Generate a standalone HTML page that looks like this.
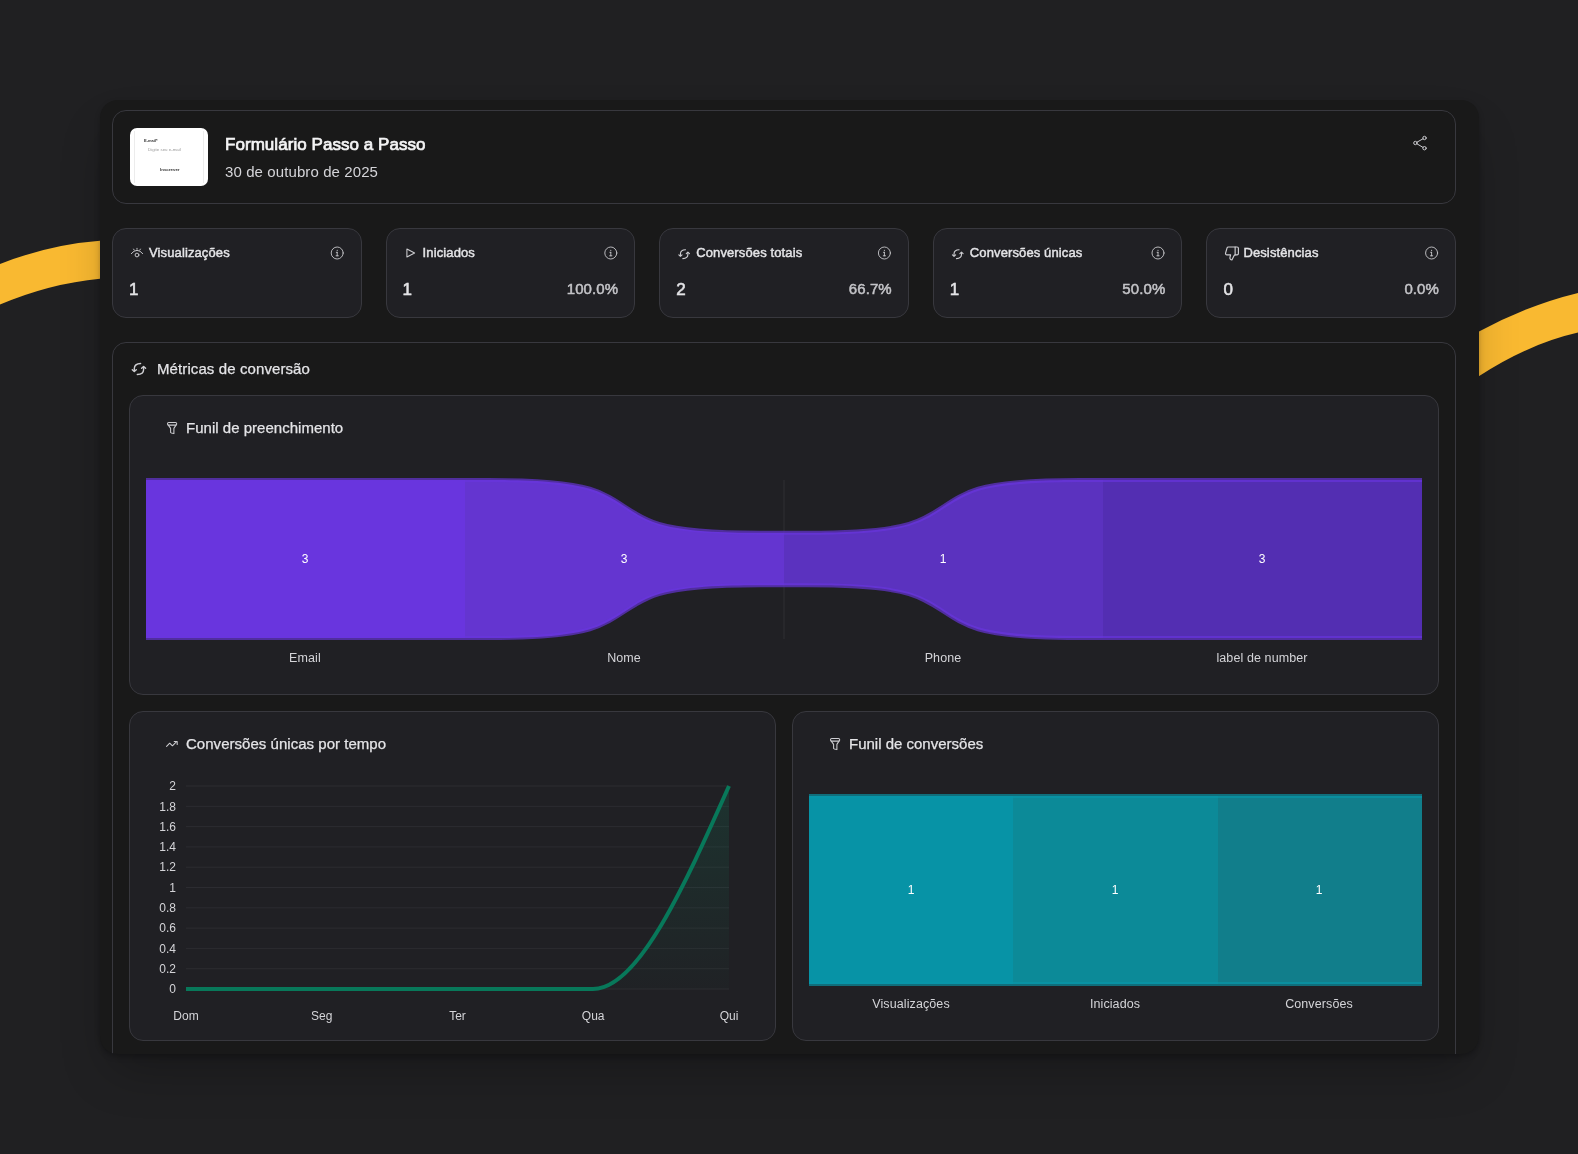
<!DOCTYPE html>
<html><head><meta charset="utf-8">
<style>
*{box-sizing:border-box;margin:0;padding:0}
html,body{width:1578px;height:1154px;overflow:hidden;background:#202022;font-family:"Liberation Sans",sans-serif;color:#e4e4e7}
#main{position:absolute;left:100px;top:100px;width:1379px;height:954px;background:#191919;border-radius:18px;overflow:hidden;box-shadow:0 25px 50px -12px rgba(0,0,0,0.28), 0 3px 6px -1px rgba(0,0,0,0.3)}
#in{position:absolute;left:-100px;top:-100px;width:1578px;height:1154px;will-change:transform}
.card{position:absolute;border:1px solid #38383e;border-radius:14px}
.stat{background:#202024;top:228px;width:249.6px;height:90px}
.t{position:absolute;white-space:nowrap;line-height:1}
.lbl{font-size:13px;font-weight:400;color:#e4e4e7;letter-spacing:0.12px;-webkit-text-stroke:0.45px #e4e4e7}
.val{font-size:17px;font-weight:400;color:#e4e4e7;-webkit-text-stroke:0.55px #e4e4e7}
.pct{font-size:15px;font-weight:400;color:#c4c4c8;letter-spacing:0.1px;-webkit-text-stroke:0.5px #c4c4c8}
.h2{font-size:15px;color:#e4e4e7;letter-spacing:0.1px;-webkit-text-stroke:0.25px #e4e4e7}
svg{position:absolute;overflow:visible}
</style></head><body>
<svg style="left:0;top:0" width="1578" height="1154">
<path d="M0 263.9 Q50 244.5 100 240.8 L115 239.7 L115 277.4 L100 278.8 Q50 283.5 0 304.6 Z" fill="#f9b931"/>
<path d="M1465 339 L1478 332 Q1528 305 1578 292.9 L1578 332.6 Q1528 344 1478 376.8 L1465 385.3 Z" fill="#f9b931"/>
</svg>
<div id="main"><div id="in">
  <div class="card" style="left:112px;top:110px;width:1344px;height:94px"></div>
  <div style="position:absolute;left:130px;top:128px;width:78px;height:58px;background:#fff;border-radius:7px;overflow:hidden">
    <div style="position:absolute;left:4px;top:3px;width:1px;height:52px;background:#ececec"></div>
    <div style="position:absolute;left:73px;top:3px;width:1px;height:52px;background:#ececec"></div>
    <div class="t" style="left:14px;top:10.5px;font-size:8px;font-weight:bold;color:#333;transform:scale(0.5);transform-origin:0 0">E-mail*</div>
    <div class="t" style="left:18px;top:20px;font-size:8px;color:#9a9a9a;transform:scale(0.55);transform-origin:0 0">Digite seu e-mail</div>
    <div class="t" style="left:29.5px;top:39.5px;font-size:8px;font-weight:bold;color:#333;transform:scale(0.55);transform-origin:0 0">Inscrever</div>
  </div>
  <div class="t" style="left:225px;top:136px;font-size:17px;font-weight:400;color:#f4f4f5;letter-spacing:0.05px;-webkit-text-stroke:0.7px #f4f4f5">Formulário Passo a Passo</div>
  <div class="t" style="left:225px;top:164px;font-size:15px;color:#d4d4d8;letter-spacing:0.1px">30 de outubro de 2025</div>
  <div class="card stat" style="left:112px"></div>
<div class="t lbl" style="left:149px;top:246px">Visualizações</div>
<div class="t val" style="left:129px;top:281px">1</div>
<div class="card stat" style="left:385.6px"></div>
<div class="t lbl" style="left:422.6px;top:246px">Iniciados</div>
<div class="t val" style="left:402.6px;top:281px">1</div>
<div class="t pct" style="right:959.8px;top:281px">100.0%</div><div class="card stat" style="left:659.2px"></div>
<div class="t lbl" style="left:696.2px;top:246px">Conversões totais</div>
<div class="t val" style="left:676.2px;top:281px">2</div>
<div class="t pct" style="right:686.2px;top:281px">66.7%</div><div class="card stat" style="left:932.8px"></div>
<div class="t lbl" style="left:969.8px;top:246px">Conversões únicas</div>
<div class="t val" style="left:949.8px;top:281px">1</div>
<div class="t pct" style="right:412.6px;top:281px">50.0%</div><div class="card stat" style="left:1206.4px"></div>
<div class="t lbl" style="left:1243.4px;top:246px">Desistências</div>
<div class="t val" style="left:1223.4px;top:281px">0</div>
<div class="t pct" style="right:139.0px;top:281px">0.0%</div>
  <div class="card" style="left:112px;top:342px;width:1344px;height:800px"></div>
  <div class="t h2" style="left:157px;top:361px">Métricas de conversão</div>

  <div class="card" style="left:129px;top:395px;width:1310px;height:300px;background:#202024"></div>
  <div class="t h2" style="left:186px;top:420px;letter-spacing:0.02px">Funil de preenchimento</div>
  <svg style="left:0;top:0" width="1578" height="1154">
    <line x1="784" x2="784" y1="480" y2="639" stroke="#2e2e33" stroke-width="1"/>
    <rect x="146" y="480" width="319" height="158" fill="#6935de"/>
    <path d="M 465.00 480.00 L 488.93 480.00 C 512.85 480.00 560.70 480.00 589.94 488.78 C 619.18 497.56 629.82 515.11 659.06 523.89 C 688.30 532.67 736.15 532.67 760.07 532.67 L 784.00 532.67 L 784.00 585.33 L 760.07 585.33 C 736.15 585.33 688.30 585.33 659.06 594.11 C 629.82 602.89 619.18 620.44 589.94 629.22 C 560.70 638.00 512.85 638.00 488.93 638.00 L 465.00 638.00 Z" fill="#6435d0"/>
    <path d="M 784.00 532.67 L 807.93 532.67 C 831.85 532.67 879.70 532.67 908.94 523.89 C 938.18 515.11 948.82 497.56 978.06 488.78 C 1007.30 480.00 1055.15 480.00 1079.08 480.00 L 1103.00 480.00 L 1103.00 638.00 L 1079.08 638.00 C 1055.15 638.00 1007.30 638.00 978.06 629.22 C 948.82 620.44 938.18 602.89 908.94 594.11 C 879.70 585.33 831.85 585.33 807.93 585.33 L 784.00 585.33 Z" fill="#5b32bf"/>
    <rect x="1103" y="480" width="319" height="158" fill="#532eb2"/>
    <g stroke="#6935de" stroke-opacity="0.66" stroke-width="4" fill="none">
      <path d="M146 480H465M146 638H465"/>
      <path d="M 465.00 480.00 L 488.93 480.00 C 512.85 480.00 560.70 480.00 589.94 488.78 C 619.18 497.56 629.82 515.11 659.06 523.89 C 688.30 532.67 736.15 532.67 760.07 532.67 L 784.00 532.67"/><path d="M 465.00 638.00 L 488.93 638.00 C 512.85 638.00 560.70 638.00 589.94 629.22 C 619.18 620.44 629.82 602.89 659.06 594.11 C 688.30 585.33 736.15 585.33 760.07 585.33 L 784.00 585.33"/><path d="M 784.00 532.67 L 807.93 532.67 C 831.85 532.67 879.70 532.67 908.94 523.89 C 938.18 515.11 948.82 497.56 978.06 488.78 C 1007.30 480.00 1055.15 480.00 1079.08 480.00 L 1103.00 480.00"/><path d="M 784.00 585.33 L 807.93 585.33 C 831.85 585.33 879.70 585.33 908.94 594.11 C 938.18 602.89 948.82 620.44 978.06 629.22 C 1007.30 638.00 1055.15 638.00 1079.08 638.00 L 1103.00 638.00"/>
      <path d="M1103 480H1422M1103 638H1422"/>
    </g>
    <g font-size="12" fill="#ffffff" text-anchor="middle">
      <text x="305" y="563">3</text><text x="624" y="563">3</text><text x="943" y="563">1</text><text x="1262" y="563">3</text>
    </g>
    <g font-size="12.5" fill="#d4d4d8" text-anchor="middle" letter-spacing="0.1">
      <text x="305" y="661.8">Email</text><text x="624" y="661.8">Nome</text><text x="943" y="661.8">Phone</text><text x="1262" y="661.8">label de number</text>
    </g>
  </svg>

  <div class="card" style="left:129px;top:711px;width:647px;height:330px;background:#202024"></div>
  <div class="t h2" style="left:186px;top:736px;letter-spacing:0.03px">Conversões únicas por tempo</div>
  <svg style="left:0;top:0" width="1578" height="1154">
    <defs><linearGradient id="gg" x1="0" y1="0" x2="0" y2="1"><stop offset="0" stop-color="#10805e" stop-opacity="0.2"/><stop offset="1" stop-color="#10805e" stop-opacity="0.02"/></linearGradient></defs>
    <line x1="186" x2="729" y1="786.0" y2="786.0" stroke="#2c2c31" stroke-width="1"/><line x1="186" x2="729" y1="806.3" y2="806.3" stroke="#2c2c31" stroke-width="1"/><line x1="186" x2="729" y1="826.6" y2="826.6" stroke="#2c2c31" stroke-width="1"/><line x1="186" x2="729" y1="846.9" y2="846.9" stroke="#2c2c31" stroke-width="1"/><line x1="186" x2="729" y1="867.2" y2="867.2" stroke="#2c2c31" stroke-width="1"/><line x1="186" x2="729" y1="887.5" y2="887.5" stroke="#2c2c31" stroke-width="1"/><line x1="186" x2="729" y1="907.8" y2="907.8" stroke="#2c2c31" stroke-width="1"/><line x1="186" x2="729" y1="928.1" y2="928.1" stroke="#2c2c31" stroke-width="1"/><line x1="186" x2="729" y1="948.4" y2="948.4" stroke="#2c2c31" stroke-width="1"/><line x1="186" x2="729" y1="968.7" y2="968.7" stroke="#2c2c31" stroke-width="1"/><line x1="186" x2="729" y1="989.0" y2="989.0" stroke="#2c2c31" stroke-width="1"/>
    <path d="M593 989 C638.3 989 683.7 887.5 729 786 L729 989 Z" fill="url(#gg)"/>
    <path d="M186 989 L593 989 C638.3 989 683.7 887.5 729 786" stroke="#08785a" stroke-width="4" fill="none" stroke-linecap="butt"/>
    <g font-size="12" fill="#d4d4d8"><text x="176" y="790.2" text-anchor="end">2</text><text x="176" y="810.5" text-anchor="end">1.8</text><text x="176" y="830.8" text-anchor="end">1.6</text><text x="176" y="851.1" text-anchor="end">1.4</text><text x="176" y="871.4" text-anchor="end">1.2</text><text x="176" y="891.7" text-anchor="end">1</text><text x="176" y="912.0" text-anchor="end">0.8</text><text x="176" y="932.3" text-anchor="end">0.6</text><text x="176" y="952.6" text-anchor="end">0.4</text><text x="176" y="972.9" text-anchor="end">0.2</text><text x="176" y="993.2" text-anchor="end">0</text></g>
    <g font-size="12" fill="#d4d4d8"><text x="186.0" y="1020" text-anchor="middle">Dom</text><text x="321.8" y="1020" text-anchor="middle">Seg</text><text x="457.5" y="1020" text-anchor="middle">Ter</text><text x="593.2" y="1020" text-anchor="middle">Qua</text><text x="729.0" y="1020" text-anchor="middle">Qui</text></g>
  </svg>

  <div class="card" style="left:792px;top:711px;width:647px;height:330px;background:#202024"></div>
  <div class="t h2" style="left:849px;top:736px;letter-spacing:0">Funil de conversões</div>
  <svg style="left:0;top:0" width="1578" height="1154">
    <rect x="809" y="796" width="204" height="188" fill="#0793a6"/>
    <rect x="1013" y="796" width="205" height="188" fill="#0c8a98"/>
    <rect x="1218" y="796" width="204" height="188" fill="#117e8b"/>
    <path d="M809 796H1422M809 984H1422" stroke="#0796a8" stroke-opacity="0.66" stroke-width="4"/>
    <g font-size="12" fill="#ffffff" text-anchor="middle">
      <text x="911" y="894">1</text><text x="1115" y="894">1</text><text x="1319" y="894">1</text>
    </g>
    <g font-size="12.5" fill="#d4d4d8" text-anchor="middle" letter-spacing="0.1">
      <text x="911" y="1007.8">Visualizações</text><text x="1115" y="1007.8">Iniciados</text><text x="1319" y="1007.8">Conversões</text>
    </g>
  </svg>
  <svg style="left:0;top:0" width="1578" height="1154" fill="none" stroke="#cdcdd1" stroke-width="1.05" stroke-linecap="round" stroke-linejoin="round">
    <g transform="translate(0 0)"><g stroke="#c4c4c8" stroke-width="1"><path d="M131.3 253.6 Q137 246.8 142.7 253.6"/><path d="M134.2 250.1l-0.6-1M137 249.3v-1M139.8 250.1l0.6-1"/><circle cx="137" cy="255" r="1.9"/></g><g stroke="#c8c8cc" stroke-width="0.9"><circle cx="337.2" cy="253" r="6"/><path d="M337.2 252.3v3.5M336.1 255.8h2.2M336.3 252.3h0.9"/></g><circle cx="337.2" cy="250.3" r="0.6" fill="#c8c8cc" stroke="none"/></g><g transform="translate(273.6 0)"><path d="M133.3 249 L141 253 L133.3 257 Z"/><g stroke="#c8c8cc" stroke-width="0.9"><circle cx="337.2" cy="253" r="6"/><path d="M337.2 252.3v3.5M336.1 255.8h2.2M336.3 252.3h0.9"/></g><circle cx="337.2" cy="250.3" r="0.6" fill="#c8c8cc" stroke="none"/></g><g transform="translate(547.2 0)"><g transform="translate(137 253) scale(0.8) translate(-139 -367.5)" stroke-width="1.4"><path d="M140.6 363.5 C137 363.6 134.4 365 134.3 368.5 L134.3 371"/><path d="M132.3 369.8 L134.3 371.6 L136.3 369.8"/><path d="M137.3 374.5 C141 374.4 143.6 373 143.6 369.5 L143.6 367"/><path d="M141.6 368.3 L143.6 366.4 L145.6 368.3"/></g><g stroke="#c8c8cc" stroke-width="0.9"><circle cx="337.2" cy="253" r="6"/><path d="M337.2 252.3v3.5M336.1 255.8h2.2M336.3 252.3h0.9"/></g><circle cx="337.2" cy="250.3" r="0.6" fill="#c8c8cc" stroke="none"/></g><g transform="translate(820.8 0)"><g transform="translate(137 253) scale(0.8) translate(-139 -367.5)" stroke-width="1.4"><path d="M140.6 363.5 C137 363.6 134.4 365 134.3 368.5 L134.3 371"/><path d="M132.3 369.8 L134.3 371.6 L136.3 369.8"/><path d="M137.3 374.5 C141 374.4 143.6 373 143.6 369.5 L143.6 367"/><path d="M141.6 368.3 L143.6 366.4 L145.6 368.3"/></g><g stroke="#c8c8cc" stroke-width="0.9"><circle cx="337.2" cy="253" r="6"/><path d="M337.2 252.3v3.5M336.1 255.8h2.2M336.3 252.3h0.9"/></g><circle cx="337.2" cy="250.3" r="0.6" fill="#c8c8cc" stroke="none"/></g><g transform="translate(1094.4 0)"><g transform="translate(129.7 245.7) scale(0.65)" stroke-width="1.8"><path d="M17 14V2"/><path d="M9 18.12 10 14H4.17a2 2 0 0 1-1.92-2.56l2.33-8A2 2 0 0 1 6.5 2H20a2 2 0 0 1 2 2v8a2 2 0 0 1-2 2h-2.76a2 2 0 0 0-1.79 1.11L12 22a3.13 3.13 0 0 1-3-3.88Z"/></g><g stroke="#c8c8cc" stroke-width="0.9"><circle cx="337.2" cy="253" r="6"/><path d="M337.2 252.3v3.5M336.1 255.8h2.2M336.3 252.3h0.9"/></g><circle cx="337.2" cy="250.3" r="0.6" fill="#c8c8cc" stroke="none"/></g>
    <g stroke-width="1"><circle cx="1415.4" cy="143" r="1.7"/><circle cx="1424.5" cy="138" r="1.7"/><circle cx="1424.5" cy="148.2" r="1.7"/><path d="M1416.9 142.2l6.1-3.4M1416.9 143.8l6.1 3.6"/></g>
    <g stroke-width="1.4"><path d="M140.6 363.5 C137 363.6 134.4 365 134.3 368.5 L134.3 371"/><path d="M132.3 369.8 L134.3 371.6 L136.3 369.8"/><path d="M137.3 374.5 C141 374.4 143.6 373 143.6 369.5 L143.6 367"/><path d="M141.6 368.3 L143.6 366.4 L145.6 368.3"/></g>
    <g id="fun"><rect x="167.5" y="422.5" width="9.2" height="2.6" rx="1.2"/><path d="M168.3 425.1 L170.6 428.4 V432.6 Q171 433.4 173.9 433.6 V428.4 L176 425.1"/></g>
    <use href="#fun" transform="translate(663 316)"/>
    <path d="M166.6 746.4 L169.7 743.2 L172.4 745.8 L176.6 741.6"/><path d="M174.2 741.4 H177.2 V744.4"/>
  </svg>
</div></div>
</body></html>
